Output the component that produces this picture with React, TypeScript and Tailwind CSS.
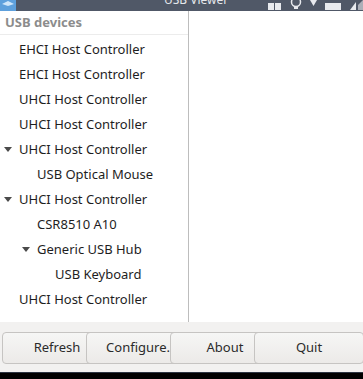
import React from "react";

const ROWS: { label: string; depth: number; open?: boolean }[] = [
  { label: "EHCI Host Controller", depth: 0 },
  { label: "EHCI Host Controller", depth: 0 },
  { label: "UHCI Host Controller", depth: 0 },
  { label: "UHCI Host Controller", depth: 0 },
  { label: "UHCI Host Controller", depth: 0, open: true },
  { label: "USB Optical Mouse", depth: 1 },
  { label: "UHCI Host Controller", depth: 0, open: true },
  { label: "CSR8510 A10", depth: 1 },
  { label: "Generic USB Hub", depth: 1, open: true },
  { label: "USB Keyboard", depth: 2 },
  { label: "UHCI Host Controller", depth: 0 },
];

const BUTTONS = ["Refresh", "Configure.", "About", "Quit"];

function TrayIcons() {
  return (
    <div className="flex items-center gap-[8px] text-[#e8eaee]">
      <svg width="14" height="11" viewBox="0 0 14 11">
        <rect x="0" y="3" width="6" height="7" fill="currentColor" />
        <rect x="7" y="3" width="6" height="7" fill="currentColor" />
      </svg>
      <svg width="12" height="11" viewBox="0 0 12 11">
        <circle cx="6" cy="2" r="4.5" fill="none" stroke="currentColor" strokeWidth="1.5" />
        <rect x="4" y="6" width="4" height="3" fill="currentColor" />
      </svg>
      <svg width="7" height="11" viewBox="0 0 7 11">
        <path d="M0 0 L7 0 L3.5 6 Z" fill="currentColor" />
      </svg>
      <svg width="17" height="11" viewBox="0 0 17 11">
        <rect x="0" y="3" width="16" height="7" fill="currentColor" />
      </svg>
      <svg width="13" height="11" viewBox="0 0 13 11">
        <path d="M0 10 L6 2 L6 10 Z" fill="currentColor" />
        <path d="M8 5 L13 0 L13 10 L8 10 Z" fill="currentColor" opacity="0.6" />
      </svg>
    </div>
  );
}

export default function App() {
  return (
    <div
      className="flex h-[379px] w-[363px] flex-col overflow-hidden bg-white"
      style={{ fontFamily: '"Noto Sans", "Open Sans", sans-serif' }}
    >
      {/* title bar, mostly scrolled off the top */}
      <div className="relative flex h-[11px] shrink-0 items-end justify-between overflow-hidden bg-[#505867]">
        <div className="h-[11px] w-[16px] bg-[#5ea0dc]">
          <svg width="16" height="11" viewBox="0 0 16 11">
            <path d="M2 4 L8 1 L14 4 L8 6 Z" fill="#cfe6fa" />
          </svg>
        </div>
        <div className="absolute left-[164px] top-[-8px] text-[12px] leading-[16px] text-[#e6e8ec]">USB Viewer</div>
        <TrayIcons />
      </div>

      <div className="flex min-h-0 flex-1">
        <div className="w-[189px] shrink-0 border-r border-[#bdbdbd]">
          <div className="h-[24px] border-b border-[#ececec] pl-[5px] pt-[1px] text-[13px] font-bold leading-[20px] text-[#8c8c8c]">
            USB devices
          </div>
          <div className="pt-[2px]">
            {ROWS.map((r, i) => (
              <div
                key={i}
                className="relative flex h-[25px] items-center text-[13px] text-[#1e1e1e]"
                style={{ paddingLeft: 19 + r.depth * 18 }}
              >
                {r.open && (
                  <svg
                    className="absolute top-[10px]"
                    style={{ left: 4 + r.depth * 18 }}
                    width="8"
                    height="5"
                    viewBox="0 0 8 5"
                  >
                    <path d="M0 0 L8 0 L4 5 Z" fill="#4a4a4a" />
                  </svg>
                )}
                {r.label}
              </div>
            ))}
          </div>
        </div>
        <div className="flex-1" />
      </div>

      {/* button bar */}
      <div className="flex h-[50px] shrink-0 items-start bg-[#f2f1f0] pl-[2px] pt-[10px]">
        {BUTTONS.map((b, i) => (
          <div
            key={b}
            className={`flex h-[32px] w-[110px] shrink-0 items-center justify-center rounded-[4px] border border-[#c6c4c2] bg-gradient-to-b from-[#f6f6f5] to-[#eceae8] text-[13px] text-[#2b2b2b] ${
              i > 0 ? "-ml-[26px]" : ""
            } ${b === "Configure." ? "pr-[6px]" : ""}`}
          >
            {b}
          </div>
        ))}
      </div>

      <div className="h-[7px] shrink-0 border-t border-[#2c3442] bg-black" />
    </div>
  );
}
